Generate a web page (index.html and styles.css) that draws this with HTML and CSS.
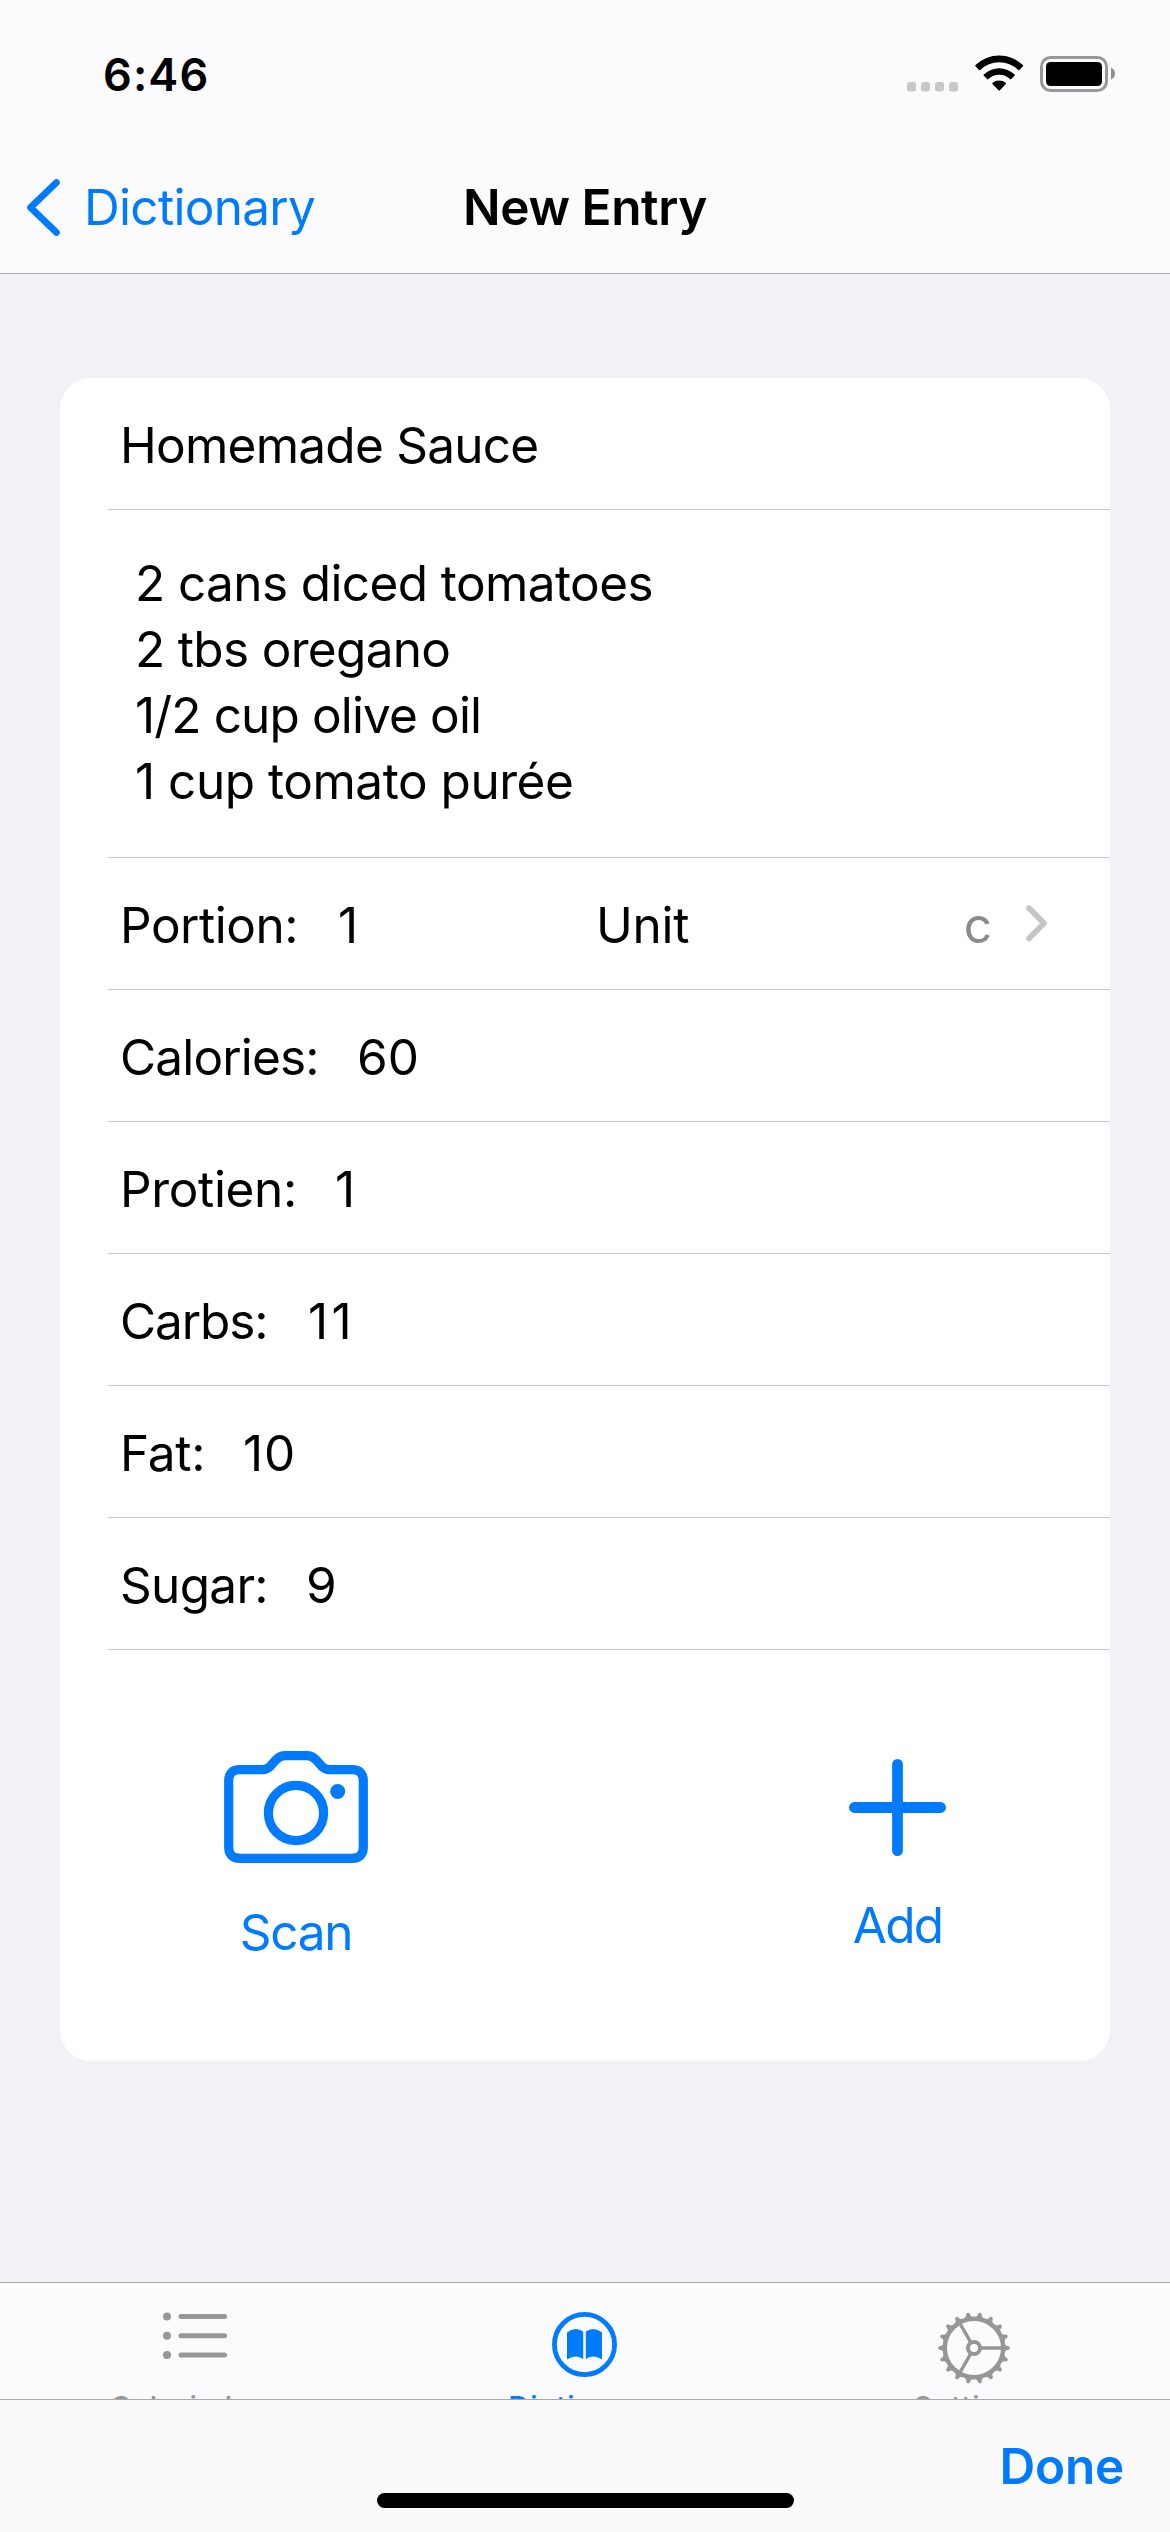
FILE: index.html
```html
<!DOCTYPE html>
<html lang="en">
<head>
<meta charset="utf-8">
<title>New Entry</title>
<link rel="stylesheet" href="styles.css">
</head>
<body>
<div class="screen">
  <header class="header">
    <div class="status">
      <span class="time">6:46</span>
      <div class="status-icons">
        <svg class="dots" width="51" height="10" viewBox="0 0 51 10" fill="#c8c8ca"><rect width="9" height="9.5" rx="2.7"/><rect x="14" width="9" height="9.5" rx="2.7"/><rect x="28" width="9" height="9.5" rx="2.7"/><rect x="42" width="9" height="9.5" rx="2.7"/></svg>
        <svg width="49" height="37" viewBox="0 0 49 37">
          <path d="M.5 11.3Q-.1 10.7.5 10.1A34 34 0 0 1 47.9 10.1Q48.5 10.7 47.9 11.3L44.4 15Q43.8 15.6 43.2 15A27 27 0 0 0 5.200 15Q4.600 15.600 4 15Z"/>
          <path d="M8.800 20.800Q8.200 20.200 8.800 19.600A22 22 0 0 1 39.600 19.600Q40.200 20.200 39.600 20.800L36.200 24.100Q35.600 24.700 35 24.100A15.500 15.500 0 0 0 13.400 24.100Q12.800 24.700 12.200 24.100Z"/>
          <path d="M17.500 28.900Q17 28.300 17.600 27.800A10.300 10.300 0 0 1 30.800 27.800Q31.400 28.300 30.900 28.900L24.900 35.300Q24.200 36.200 23.500 35.300Z"/>
        </svg>
        <svg width="75" height="37" viewBox="0 0 75 37"><rect x="1.500" y="2.500" width="65" height="33" rx="9" fill="none" stroke="#98989a" stroke-width="3"/><rect x="6" y="7" width="56" height="24" rx="4.500"/><path d="M71 12.500Q75 14.500 75 18.500T71 24.500Z" fill="#8e8e90"/></svg>
      </div>
    </div>
    <nav class="nav">
      <a class="back">
        <svg width="33" height="57" viewBox="0 0 33 57" fill="none" stroke="#007aff" stroke-width="6.600" stroke-linecap="round" stroke-linejoin="round"><path d="M29.500 3.500L3.500 28.500L29.500 53.500"/></svg>
        <span class="back-label">Dictionary</span>
      </a>
      <h1 class="title">New Entry</h1>
    </nav>
  </header>

  <main class="content">
    <section class="card">
      <div class="row"><span class="name">Homemade Sauce</span></div>
      <div class="row ingredients">
        <span class="line cans">2 cans diced tomatoes</span>
        <span class="line tbs">2 tbs oregano</span>
        <span class="line oil">1/2 cup olive oil</span>
        <span class="line puree">1 cup tomato purée</span>
      </div>
      <div class="row">
        <div class="portion-half"><span class="label portion">Portion:</span><span>1</span></div>
        <span class="unit">Unit</span>
        <span class="unit-value">c</span>
        <svg class="disclosure" width="21" height="37" viewBox="0 0 21 37" fill="none" stroke="#c4c4c6" stroke-width="5.600" stroke-linecap="round" stroke-linejoin="round"><path d="M3 3L18 18.300L3 33.500"/></svg>
      </div>
      <div class="row"><span class="label calories">Calories:</span><span>60</span></div>
      <div class="row"><span class="label protein">Protien:</span><span>1</span></div>
      <div class="row"><span class="label carbs">Carbs:</span><span class="eleven">11</span></div>
      <div class="row"><span class="label fat">Fat:</span><span class="ten">10</span></div>
      <div class="row"><span class="label sugar">Sugar:</span><span>9</span></div>
      <div class="actions">
        <a class="action scan">
          <svg width="144" height="112" viewBox="0 0 144 112" fill="none" stroke="#007aff" stroke-width="9.200"><path d="M16 18.700H38.500Q43 18.700 46.500 15L51.500 9.300Q56 4.700 61 4.700H83Q88 4.700 92.500 9.300L97.500 15Q101 18.700 105.500 18.700H128Q139.300 18.700 139.300 30V96Q139.300 107.300 128 107.300H16Q4.700 107.300 4.700 96V30Q4.700 18.700 16 18.700Z"/><circle cx="72" cy="62" r="27.600"/><circle cx="113.700" cy="40.500" r="7.500" fill="#007aff" stroke="none"/></svg>
          <span class="scan-label">Scan</span>
        </a>
        <a class="action add">
          <svg width="97" height="97" viewBox="0 0 97 97" stroke="#007aff" stroke-width="10.800" stroke-linecap="round"><path d="M48.500 5.400V91.600M5.400 48.500H91.600"/></svg>
          <span class="add-label">Add</span>
        </a>
      </div>
    </section>
  </main>

  <nav class="tabs">
    <a class="tab">
      <span class="tab-icon"><svg width="64" height="48" viewBox="0 0 64 48" fill="#979799"><circle cx="4" cy="4.500" r="4"/><circle cx="4" cy="23.800" r="4"/><circle cx="4" cy="43" r="4"/><rect x="15.500" y="2" width="48.500" height="5" rx="2.500"/><rect x="15.500" y="21.300" width="48.500" height="5" rx="2.500"/><rect x="15.500" y="40.500" width="48.500" height="5" rx="2.500"/></svg></span>
      <span class="tab-label">Calorie Log</span>
    </a>
    <a class="tab active">
      <span class="tab-icon"><svg width="65" height="65" viewBox="0 0 65 65"><circle cx="32.500" cy="32.500" r="30.100" fill="none" stroke="#007aff" stroke-width="4.800"/><path d="M15 20.500Q23 14 31.200 19.500V47Q23 42 15.500 47.200Q15 47.400 15 46.800ZM50 20.500Q42 14 33.800 19.500V47Q42 42 49.500 47.200Q50 47.400 50 46.800Z" fill="#007aff"/></svg></span>
      <span class="tab-label">Dictionary</span>
    </a>
    <a class="tab">
      <span class="tab-icon"><svg width="72" height="72" viewBox="-36 -36 72 72" fill="none" stroke="#979799">
        <defs><path id="tooth" d="M30 -4.300Q32.500 -1.800 35.300 -1.500Q36.400 0 35.300 1.500Q32.500 1.800 30 4.300Z" fill="#979799" stroke="none"/></defs>
        <circle r="29.200" stroke-width="4.400"/><circle r="6" stroke-width="4"/>
        <path d="M7 0H28M-3.500 -6.100L-14 -24.300M-3.500 6.100L-14 24.300" stroke-width="3.400"/>
        <use href="#tooth"/><use href="#tooth" transform="rotate(20)"/><use href="#tooth" transform="rotate(40)"/><use href="#tooth" transform="rotate(60)"/><use href="#tooth" transform="rotate(80)"/><use href="#tooth" transform="rotate(100)"/><use href="#tooth" transform="rotate(120)"/><use href="#tooth" transform="rotate(140)"/><use href="#tooth" transform="rotate(160)"/><use href="#tooth" transform="rotate(180)"/><use href="#tooth" transform="rotate(200)"/><use href="#tooth" transform="rotate(220)"/><use href="#tooth" transform="rotate(240)"/><use href="#tooth" transform="rotate(260)"/><use href="#tooth" transform="rotate(280)"/><use href="#tooth" transform="rotate(300)"/><use href="#tooth" transform="rotate(320)"/><use href="#tooth" transform="rotate(340)"/>
      </svg></span>
      <span class="tab-label">Settings</span>
    </a>
  </nav>

  <footer class="toolbar">
    <a class="done">Done</a>
    <div class="home-indicator"></div>
  </footer>
</div>
</body>
</html>
```
FILE: styles.css
```css
* { box-sizing: border-box; }
body { margin: 0; }
svg { display: block; flex: none; }

.screen {
  width: 1170px;
  height: 2532px;
  display: flex;
  flex-direction: column;
  overflow: hidden;
  background: #f2f1f6;
  color: #000;
  font-family: Inter, "Liberation Sans", sans-serif;
  font-size: 49.5px;
  line-height: 60px;
  white-space: nowrap;
}

/* Header */
.header {
  height: 274px;
  background: #fbfbfd;
  border-bottom: 1px solid #a9a9ac;
}
.status {
  height: 141px;
  padding: 44px 55px 0 103px;
  display: flex;
  justify-content: space-between;
  align-items: flex-start;
}
.time { font-size: 45px; font-weight: 600; letter-spacing: 1.1px; line-height: 61px; }
.status-icons { display: flex; align-items: flex-end; gap: 16px; margin-top: 11px; }
.dots { margin: 0 1px 0 0; }
.nav {
  height: 132px;
  padding: 0 27px;
  display: grid;
  grid-template-columns: 1fr auto 1fr;
  align-items: center;
}
.back { display: flex; align-items: center; gap: 24px; color: #007aff; }
.back-label { letter-spacing: -0.7px; }
.title { margin: 0; font-size: 49.5px; font-weight: 600; letter-spacing: -0.4px; }

/* Form card */
.content { flex: 1; padding: 104px 60px 0; }
.card { height: 1683px; padding-left: 48px; border-radius: 31px; background: #fff; }
.row {
  height: 132px;
  padding: 3px 0 0 12px;
  display: flex;
  align-items: center;
  border-bottom: 1px solid #c6c6c8;
}
.name { letter-spacing: -0.75px; }
.ingredients {
  height: 348px;
  padding: 40px 0 0 27px;
  flex-direction: column;
  align-items: flex-start;
  line-height: 66px;
}
.cans { letter-spacing: -0.6px; }
.tbs { letter-spacing: -0.67px; }
.oil { letter-spacing: -0.86px; }
.puree { letter-spacing: -0.47px; }

.portion-half { width: 476px; display: flex; }
.portion { width: 218px; letter-spacing: -0.46px; }
.calories { width: 237px; letter-spacing: -0.84px; }
.protein { width: 215px; letter-spacing: -0.34px; }
.carbs { width: 188px; letter-spacing: -1.1px; }
.fat { width: 123px; letter-spacing: -0.23px; }
.sugar { width: 186px; letter-spacing: -0.7px; }
.eleven { letter-spacing: 3.3px; }
.ten { letter-spacing: 0.9px; }
.unit { flex: 1; letter-spacing: -0.3px; }
.unit-value { color: #8a8a8e; }
.disclosure { margin: 0 63px 3px 34px; }

.actions {
  height: 411px;
  margin-left: -48px;
  padding-top: 2px;
  display: flex;
  justify-content: space-between;
  align-items: center;
  color: #007aff;
}
.action { display: flex; flex-direction: column; align-items: center; gap: 39px; }
.scan { width: 472px; }
.add { width: 425px; }
.scan-label { letter-spacing: -1.27px; }
.add-label { letter-spacing: -1.73px; }

/* Tab bar, partly covered by the toolbar below */
.tabs {
  height: 117px;
  padding: 29px 1px 0 0;
  display: grid;
  grid-template-columns: repeat(3, 1fr);
  overflow: hidden;
  background: #fbfbfd;
  border-top: 1px solid #a9a9ac;
}
.tab { display: flex; flex-direction: column; align-items: center; color: #979799; }
.tab-icon { height: 77px; flex: none; }
.tab-label { font-size: 29px; font-weight: 500; line-height: 36px; letter-spacing: 1.05px; }
.active { color: #007aff; }

.toolbar {
  position: relative;
  height: 133px;
  padding: 36px 46px 0 0;
  text-align: right;
  background: #fafafa;
  border-top: 1px solid #a9a9ac;
}
.done { color: #007aff; font-weight: 600; letter-spacing: -0.26px; }
.home-indicator {
  position: absolute;
  left: 377px;
  bottom: 24px;
  width: 417px;
  height: 15px;
  border-radius: 7.5px;
  background: #000;
}
```
